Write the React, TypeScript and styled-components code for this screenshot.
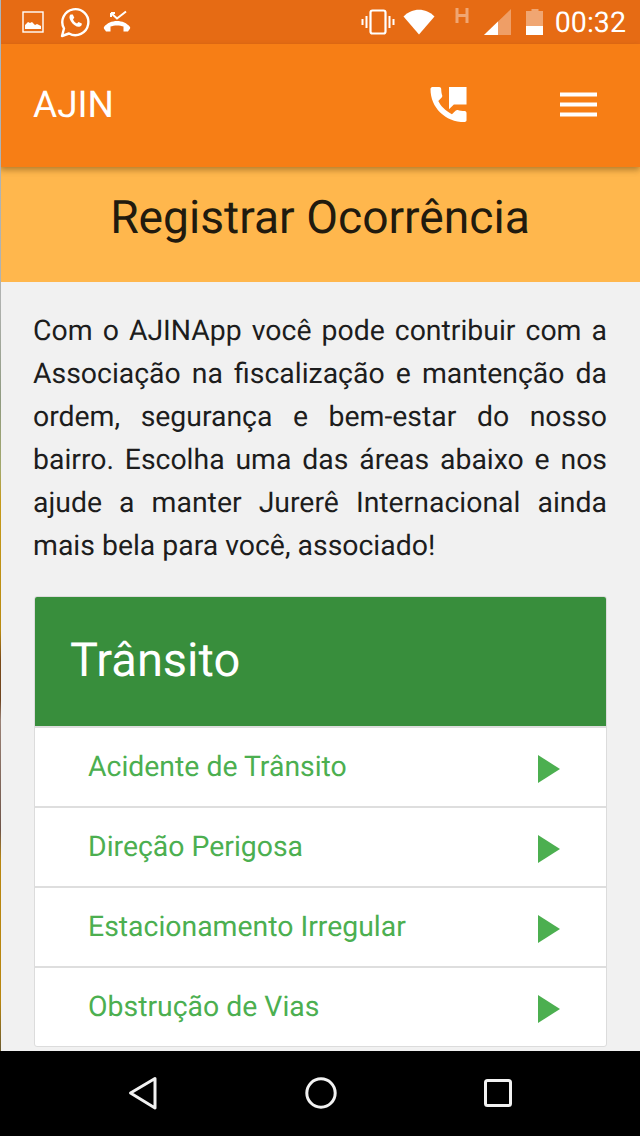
import React from "react";
import styled, { createGlobalStyle } from "styled-components";

const Global = createGlobalStyle`
  html, body { margin: 0; padding: 0; background: #000; }
  body { font-family: Roboto, "Liberation Sans", sans-serif; text-rendering: geometricPrecision; }
  * { box-sizing: border-box; }
`;

const Screen = styled.div`
  width: 640px;
  height: 1136px;
  position: relative;
  display: flex;
  flex-direction: column;
  overflow: hidden;
  background: #f1f1f1;
`;

const EdgeStrip = styled.div`
  position: absolute;
  left: 0;
  top: 0;
  width: 1px;
  height: 1051px;
  z-index: 2;
  background: linear-gradient(
    to bottom,
    #a9b4bd 0,
    #b0b2b0 300px,
    #8f9a80 400px,
    #a3a86a 470px,
    #c59a1a 500px,
    #b98a10 630px,
    #7a4a18 660px,
    #6e4420 700px,
    #9a8276 720px,
    #6e5448 830px,
    #b8860f 860px,
    #b8860f 1000px,
    #6a5a30 1051px
  );
`;

const StatusBar = styled.div`
  height: 44px;
  flex: none;
  background: #e66b14;
  display: flex;
  align-items: center;
  justify-content: space-between;
  padding: 0 14px 0 22px;
  color: #fff;
`;

const StatusGroup = styled.div`
  display: flex;
  align-items: center;
`;

const StatusSlot = styled.span<{ $left?: number; $up?: number }>`
  display: flex;
  margin-left: ${(p) => p.$left ?? 0}px;
  margin-bottom: ${(p) => p.$up ?? 0}px;
`;

const Clock = styled.span`
  font-size: 28.6px;
  font-weight: 400;
  line-height: 44px;
  margin-left: 11px;
`;

const AppBar = styled.header`
  height: 123px;
  flex: none;
  background: #f77e15;
  display: flex;
  align-items: center;
  padding: 0 43px 2px 33px;
  box-shadow: 0 3px 6px rgba(90, 60, 10, 0.45);
  position: relative;
  z-index: 1;
`;

const Brand = styled.div`
  flex: 1;
  color: #fff;
  font-size: 37px;
  line-height: 42px;
  padding-top: 2px;
`;

const AppActions = styled.div`
  display: flex;
  align-items: center;
  gap: 92px;
`;

const TitleBand = styled.div`
  height: 115px;
  flex: none;
  background: #ffb74d;
  display: flex;
  align-items: center;
  justify-content: center;
  padding-bottom: 13px;
  color: #211a0e;
  font-size: 46.2px;
`;

const Main = styled.main`
  flex: 1;
  min-height: 0;
  overflow: hidden;
  padding: 27px 33px 0;
`;

const Intro = styled.p`
  margin: 0 0 29px;
  font-size: 28.4px;
  line-height: 43px;
  text-align: justify;
  color: #1d1d1d;
`;

const Card = styled.section`
  margin-left: 1px;
  border: 1px solid #dcdcdc;
  border-radius: 3px;
  background: #fff;
  overflow: hidden;
`;

const CardHeader = styled.h2`
  margin: 0;
  height: 129px;
  background: #388e3c;
  color: #fff;
  font-size: 47px;
  font-weight: 400;
  line-height: 128px;
  padding-left: 35px;
`;

const Row = styled.div`
  height: 80px;
  display: flex;
  align-items: center;
  justify-content: space-between;
  padding: 0 46px 0 53px;
  color: #4caf50;
  font-size: 28.4px;
  border-top: 2px solid #dedede;
`;

const RowLabel = styled.span`
  position: relative;
  top: -1px;
`;

const ArrowMark = styled.svg`
  position: relative;
  top: 2px;
`;

const NavBar = styled.nav`
  height: 85px;
  flex: none;
  background: #000;
  display: flex;
  align-items: center;
  justify-content: center;
  gap: 146px;
  padding-bottom: 1px;
`;

const BackIcon = () => (
  <svg width="32" height="36" viewBox="0 0 32 36">
    <path d="M28 3.5 L3.5 18 L28 33 Z" fill="none" stroke="#f2f2f2" strokeWidth="3" strokeLinejoin="round" />
  </svg>
);
const HomeIcon = () => (
  <svg width="32" height="32" viewBox="0 0 32 32">
    <circle cx="16" cy="16" r="14.2" fill="none" stroke="#f2f2f2" strokeWidth="3" />
  </svg>
);
const RecentIcon = () => (
  <svg width="30" height="30" viewBox="0 0 30 30">
    <rect x="2.5" y="2.5" width="25" height="25" rx="2" fill="none" stroke="#f2f2f2" strokeWidth="3" />
  </svg>
);

const ImageIcon = () => (
  <svg width="22" height="22" viewBox="0 0 22 22">
    <rect x="1" y="1" width="20" height="20" fill="none" stroke="#fff" strokeWidth="1.4" />
    <path d="M3 18 V14 L6 11 L8 12 L10 11 L13 14 L15 13 L19 15 V18 Z" fill="#fff" />
  </svg>
);
const WhatsIcon = () => (
  <svg width="30" height="32" viewBox="0 0 30 32">
    <path d="M2 30 L4 22.5 A13 13 0 1 1 9 27.5 Z" fill="none" stroke="#fff" strokeWidth="2.4" strokeLinejoin="round" />
    <path d="M10.5 8.5 C9 10 9 12.5 11 15.5 C13.5 19.5 17.5 21.5 20 20.5 C21.5 20 22 18.5 21.8 17.5 L18.5 16 L17 17.5 C15 16.8 13.5 15 13 13.2 L14.3 11.8 L12.8 8.5 Z" fill="#fff" />
  </svg>
);
const MissedIcon = () => (
  <svg width="28" height="24" viewBox="0 0 28 24">
    <path d="M8 3 L14 8.5 L23 1.5" fill="none" stroke="#fff" strokeWidth="2" />
    <path d="M8 3 H12 M8 3 V7" stroke="#fff" strokeWidth="2" />
    <path d="M1 17 C7 9 21 9 27 17 C27.5 18 27 19 26 20 L25 21.5 H20.5 V16.5 C17 15 11 15 7.5 16.5 V21.5 H3 L2 20 C1 19 0.5 18 1 17 Z" fill="#fff" />
  </svg>
);
const VibrateIcon = () => (
  <svg width="34" height="26" viewBox="0 0 34 26">
    <rect x="9.5" y="1.5" width="15" height="23" rx="2" fill="none" stroke="#fff" strokeWidth="2.2" />
    <path d="M5.5 7 V19 M1.5 10 V16 M28.5 7 V19 M32.5 10 V16" stroke="#fff" strokeWidth="2" />
  </svg>
);
const WifiIcon = () => (
  <svg width="32" height="26" viewBox="0 0 32 26">
    <path d="M0.5 7.5 C9 -1.5 23 -1.5 31.5 7.5 L16 25.5 Z" fill="#fff" />
  </svg>
);
const HIcon = () => (
  <svg width="14" height="15" viewBox="0 0 14 15">
    <path d="M2 0 V15 M12 0 V15 M2 7.5 H12" stroke="#fff" strokeOpacity="0.4" strokeWidth="3" />
  </svg>
);
const SignalIcon = () => (
  <svg width="28" height="26" viewBox="0 0 28 26">
    <path d="M0 26 L27 0 V26 Z" fill="#fff" fillOpacity="0.35" />
    <path d="M0 26 L14 12.5 V26 Z" fill="#fff" />
  </svg>
);
const BatteryIcon = () => (
  <svg width="18" height="26" viewBox="0 0 18 26">
    <path d="M5.5 0 H12.5 V2 H17 V26 H0 V2 H5.5 Z" fill="#fff" fillOpacity="0.4" />
    <rect x="0" y="17" width="17" height="9" fill="#fff" />
  </svg>
);
const CallIcon = () => (
  <svg width="38" height="37" viewBox="0 0 38 38">
    <path d="M0 3 C0 2 1 1 2 1 H9 C10 1 11 2 11 3 C11 6 11.5 8 12 9.5 C12.3 10.5 12 11.2 11.5 11.8 L8 15.5 C10.5 20.5 15 25.5 22 29 L26 25.2 C26.6 24.6 27.4 24.5 28 24.7 C30 25.4 32.5 25.8 35 25.8 C36.2 25.8 37 26.6 37 27.8 V35 C37 36.4 36.2 37 35 37 C15 37 0 22 0 3 Z" fill="#fff" />
    <path d="M19 1 H37 V19 H24 L19 24 Z" fill="#fff" />
  </svg>
);
const MenuIcon = () => (
  <svg width="37" height="25" viewBox="0 0 37 25">
    <path d="M0 2.5 H37 M0 12.5 H37 M0 22.5 H37" stroke="#fff" strokeWidth="4" />
  </svg>
);
const Arrow = () => (
  <ArrowMark width="22" height="28" viewBox="0 0 22 28">
    <path d="M0 0 L22 14 L0 28 Z" fill="#4caf50" />
  </ArrowMark>
);

const items = ["Acidente de Trânsito", "Direção Perigosa", "Estacionamento Irregular", "Obstrução de Vias"];

export default function App() {
  return (
    <Screen>
      <Global />
      <EdgeStrip />
      <StatusBar>
        <StatusGroup>
          <ImageIcon />
          <StatusSlot $left={16}>
            <WhatsIcon />
          </StatusSlot>
          <StatusSlot $left={13}>
            <MissedIcon />
          </StatusSlot>
        </StatusGroup>
        <StatusGroup>
          <VibrateIcon />
          <StatusSlot $left={8}>
            <WifiIcon />
          </StatusSlot>
          <StatusSlot $left={20} $up={13}>
            <HIcon />
          </StatusSlot>
          <StatusSlot $left={15}>
            <SignalIcon />
          </StatusSlot>
          <StatusSlot $left={14}>
            <BatteryIcon />
          </StatusSlot>
          <Clock>00:32</Clock>
        </StatusGroup>
      </StatusBar>
      <AppBar>
        <Brand>AJIN</Brand>
        <AppActions>
          <CallIcon />
          <MenuIcon />
        </AppActions>
      </AppBar>
      <TitleBand>Registrar Ocorrência</TitleBand>
      <Main>
        <Intro>
          Com o AJINApp você pode contribuir com a Associação na fiscalização e mantenção da ordem, segurança e
          bem-estar do nosso bairro. Escolha uma das áreas abaixo e nos ajude a manter Jurerê Internacional ainda mais
          bela para você, associado!
        </Intro>
        <Card>
          <CardHeader>Trânsito</CardHeader>
          {items.map((item) => (
            <Row key={item}>
              <RowLabel>{item}</RowLabel>
              <Arrow />
            </Row>
          ))}
        </Card>
      </Main>
      <NavBar>
        <BackIcon />
        <HomeIcon />
        <RecentIcon />
      </NavBar>
    </Screen>
  );
}
